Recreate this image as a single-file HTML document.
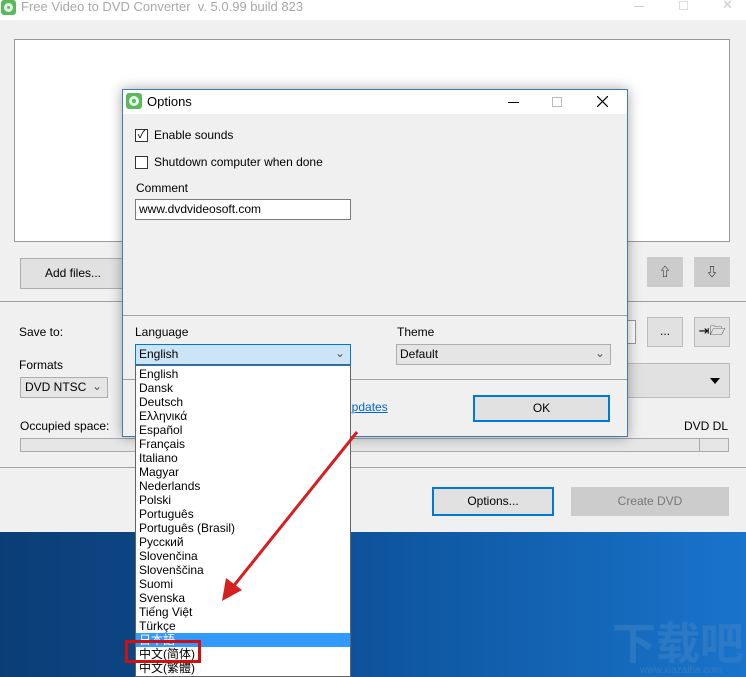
<!DOCTYPE html>
<html><head><meta charset="utf-8"><style>
*{box-sizing:border-box;margin:0;padding:0}
body{width:746px;height:677px;overflow:hidden;position:relative;font-family:"Liberation Sans","Noto Sans CJK SC",sans-serif;font-size:12px;color:#000;background:#f0f0f0}
.a{position:absolute}
.btn{position:absolute;background:#e1e1e1;border:1px solid #adadad;text-align:center}
.sep{position:absolute;height:1px;background:#a0a0a0}
.dd li{list-style:none;height:14px;line-height:14px;padding-left:3px;font-size:12px}
</style></head><body>
<div class="a" style="left:0;top:0;width:746px;height:20px;background:#fff"></div>
<div class="a" style="left:1px;top:0;width:15px;height:15px;background:#5cb85c;border-radius:3px"><div class="a" style="left:3px;top:3px;width:9px;height:9px;border-radius:50%;background:#e8f5e8"></div><div class="a" style="left:6px;top:6px;width:3px;height:3px;border-radius:50%;background:#5cb85c"></div></div>
<div class="a" style="left:21px;top:-1px;color:#a8a8a8;font-size:13px">Free Video to DVD Converter &nbsp;v. 5.0.99 build 823</div>
<div class="a" style="left:634px;top:6px;width:10px;height:1px;background:#ccc"></div>
<div class="a" style="left:679px;top:1px;width:9px;height:9px;border:1px solid #ddd"></div>
<div class="a" style="left:722px;top:-3px;color:#ccc;font-size:13px">✕</div>
<div class="a" style="left:14px;top:39px;width:716px;height:203px;background:#fff;border:1px solid #9a9a9a"></div>
<div class="btn" style="left:20px;top:258px;width:106px;height:31px;line-height:29px">Add files...</div>
<div class="btn" style="left:647px;top:257px;width:36px;height:30px;line-height:28px;background:#ccc;border-color:#ccc">⇧</div>
<div class="btn" style="left:694px;top:257px;width:36px;height:30px;line-height:28px;background:#ccc;border-color:#ccc">⇩</div>
<div class="sep" style="left:0;top:301px;width:746px"></div>
<div class="a" style="left:19px;top:325px">Save to:</div>
<div class="a" style="left:600px;top:320px;width:36px;height:24px;background:#fff;border:1px solid #999"></div>
<div class="btn" style="left:647px;top:317px;width:36px;height:30px;line-height:26px;border-color:#bbb">...</div>
<div class="btn" style="left:694px;top:317px;width:36px;height:30px;line-height:26px;border-color:#bbb;font-size:13px">⇥🗁</div>
<div class="a" style="left:19px;top:358px">Formats</div>
<div class="a" style="left:20px;top:377px;width:88px;height:21px;background:#e5e5e5;border:1px solid #adadad;padding:2px 4px;white-space:nowrap">DVD NTSC<span class="a" style="right:5px;top:1px;color:#555">⌄</span></div>
<div class="a" style="left:627px;top:363px;width:103px;height:35px;background:#e1e1e1;border:1px solid #bbb"><div class="a" style="right:9px;top:14px;border:5px solid transparent;border-top:6px solid #000;width:0;height:0"></div></div>
<div class="a" style="left:20px;top:419px">Occupied space:</div>
<div class="a" style="left:684px;top:419px">DVD DL</div>
<div class="a" style="left:20px;top:438px;width:709px;height:14px;background:#e6e6e6;border:1px solid #aaa"></div>
<div class="a" style="left:699px;top:438px;width:1px;height:14px;background:#aaa"></div>
<div class="sep" style="left:0;top:467px;width:746px"></div>
<div class="btn" style="left:432px;top:487px;width:122px;height:29px;line-height:25px;border:2px solid #0078d7">Options...</div>
<div class="btn" style="left:571px;top:487px;width:158px;height:29px;line-height:27px;background:#ccc;border-color:#ccc;color:#777">Create DVD</div>
<div class="a" style="left:0;top:532px;width:746px;height:145px;background:linear-gradient(90deg,#0b3d75 0%,#0d5199 45%,#1467b8 80%,#1a74cc 100%)"></div>
<div class="a" style="left:612px;top:618px;color:#3d82c6;font-size:44px;font-weight:bold;font-family:'Noto Sans CJK SC',sans-serif;line-height:44px;opacity:.55">下载吧</div>
<div class="a" style="left:640px;top:665px;color:#3f82c4;font-size:10px;opacity:.7">www.xiazaiba.com</div>
<div class="a" style="left:122px;top:89px;width:506px;height:348px;background:#f0f0f0;border:1px solid #3c7fb1;box-shadow:0 0 12px rgba(0,0,0,.35)"></div>
<div class="a" style="left:123px;top:90px;width:504px;height:24px;background:#fff"></div>
<div class="a" style="left:126px;top:93px;width:16px;height:16px;background:#5cb85c;border-radius:3px"><div class="a" style="left:3px;top:3px;width:10px;height:10px;border-radius:50%;background:#e8f5e8"></div><div class="a" style="left:6px;top:6px;width:4px;height:4px;border-radius:50%;background:#5cb85c"></div></div>
<div class="a" style="left:147px;top:94px;font-size:13px">Options</div>
<div class="a" style="left:508px;top:102px;width:11px;height:1px;background:#000"></div>
<div class="a" style="left:552px;top:97px;width:10px;height:10px;border:1px solid #bbb"></div>
<svg class="a" style="left:597px;top:96px" width="11" height="11"><path d="M0 0L11 11M11 0L0 11" stroke="#000" stroke-width="1.2"/></svg>
<div class="a" style="left:135px;top:129px;width:13px;height:13px;border:1px solid #333;background:#fff;font-size:11px;line-height:11px;text-align:center">✓</div>
<div class="a" style="left:154px;top:128px">Enable sounds</div>
<div class="a" style="left:135px;top:156px;width:13px;height:13px;border:1px solid #333;background:#fff"></div>
<div class="a" style="left:154px;top:155px">Shutdown computer when done</div>
<div class="a" style="left:136px;top:181px">Comment</div>
<div class="a" style="left:135px;top:199px;width:216px;height:21px;background:#fff;border:1px solid #7a7a7a;padding:2px 3px">www.dvdvideosoft.com</div>
<div class="sep" style="left:123px;top:315px;width:504px"></div>
<div class="a" style="left:135px;top:325px">Language</div>
<div class="a" style="left:397px;top:325px">Theme</div>
<div class="a" style="left:135px;top:344px;width:216px;height:21px;background:#cce4f7;border:1px solid #0078d7;padding:2px 3px">English<span class="a" style="right:5px;top:1px;color:#555">⌄</span></div>
<div class="a" style="left:396px;top:344px;width:215px;height:21px;background:#e5e5e5;border:1px solid #adadad;padding:2px 3px">Default<span class="a" style="right:5px;top:1px;color:#555">⌄</span></div>
<div class="sep" style="left:123px;top:379px;width:504px"></div>
<div class="a" style="left:345px;top:400px;color:#0066cc;text-decoration:underline">updates</div>
<div class="btn" style="left:473px;top:395px;width:137px;height:27px;line-height:23px;border:2px solid #0078d7">OK</div>
<ul class="a dd" style="left:135px;top:365px;width:216px;height:312px;background:#fff;border:1px solid #646464;padding-top:1px">
<li>English</li><li>Dansk</li><li>Deutsch</li><li>Ελληνικά</li><li>Español</li><li>Français</li><li>Italiano</li><li>Magyar</li><li>Nederlands</li><li>Polski</li><li>Português</li><li>Português (Brasil)</li><li>Русский</li><li>Slovenčina</li><li>Slovenščina</li><li>Suomi</li><li>Svenska</li><li>Tiếng Việt</li><li>Türkçe</li><li style="background:#3399ff;color:#fff">日本語</li><li>中文(简体)</li><li>中文(繁體)</li></ul>
<div class="a" style="left:125px;top:640px;width:76px;height:23px;border:3px solid #d01010"></div>
<svg class="a" style="left:0;top:0" width="746" height="677"><line x1="357" y1="432" x2="232" y2="588" stroke="#d42020" stroke-width="3"/><polygon points="222,601 226,578 242,590" fill="#d42020"/></svg>
</body></html>
